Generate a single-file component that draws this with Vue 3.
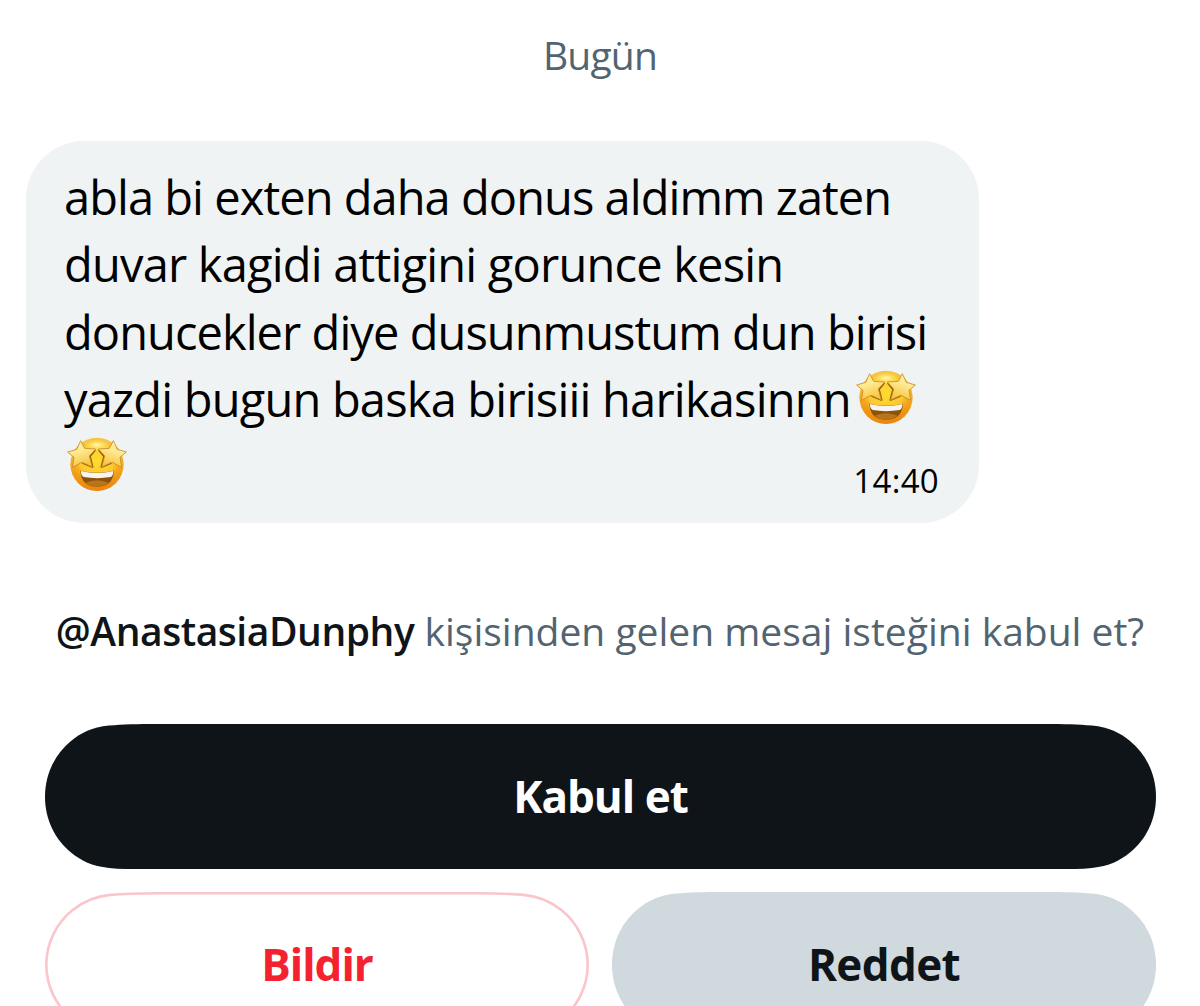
<template>
  <main class="request-page">
    <div class="date-label">Bugün</div>

    <article class="bubble">
      <p class="bubble-text">
        <span
          v-for="(line, i) in lines"
          :key="i"
          class="line"
          :style="{ letterSpacing: line.tracking + 'px' }"
        >
          <span v-if="line.text" class="line-words">{{ line.text }}</span>
          <svg v-if="line.emoji" class="emoji" viewBox="17 30 180 165" role="img" aria-label="🤩">
            <defs>
              <linearGradient :id="'face' + i" x1="0" y1="0" x2="0" y2="1">
                <stop offset="0" stop-color="#f6c545" />
                <stop offset="0.45" stop-color="#f5ae22" />
                <stop offset="1" stop-color="#ea850c" />
              </linearGradient>
              <radialGradient :id="'glow' + i" cx="0.5" cy="0.45" r="0.5">
                <stop offset="0" stop-color="#ffdc2e" />
                <stop offset="0.7" stop-color="#fdc730" />
                <stop offset="1" stop-color="#f6ac20" stop-opacity="0" />
              </radialGradient>
              <radialGradient :id="'shine' + i">
                <stop offset="0" stop-color="#fff7b0" />
                <stop offset="1" stop-color="#ffe561" stop-opacity="0" />
              </radialGradient>
              <linearGradient :id="'star' + i" x1="0" y1="0" x2="0.4" y2="1">
                <stop offset="0" stop-color="#fff3ae" />
                <stop offset="0.5" stop-color="#fde98f" />
                <stop offset="1" stop-color="#f8c545" />
              </linearGradient>
            </defs>
            <circle cx="107" cy="112" r="80" :fill="`url(#face${i})`" />
            <circle cx="107" cy="108" r="73" :fill="`url(#glow${i})`" />
            <ellipse cx="107" cy="54" rx="44" ry="20" :fill="`url(#shine${i})`" />
            <path d="M57 131Q107 143 158 131Q155 179 107 179Q60 179 57 131Z" fill="#8d520a" />
            <path d="M72 167Q107 152 142 167Q126 179 107 179Q88 179 72 167Z" fill="#b87519" />
            <path d="M59 132Q107 144 156 132Q156 147 148 150Q107 157 67 150Q58 146 59 132Z" fill="#f7f3ee" />
            <g fill="none" stroke="#8f5c0c" stroke-width="7" stroke-linejoin="round">
              <path d="M101 68L85 88L93 119L64 107" />
              <path d="M113 68L129 88L121 119L150 107" />
            </g>
            <g :fill="`url(#star${i})`" stroke="#c98a22" stroke-width="2.5" stroke-linejoin="round">
              <path :d="starPath" />
              <path :d="starPath" transform="translate(214 0) scale(-1 1)" />
            </g>
          </svg>
        </span>
      </p>
      <time class="bubble-time">14:40</time>
    </article>

    <p class="question">
      <strong class="handle">@AnastasiaDunphy</strong> kişisinden gelen mesaj isteğini kabul et?
    </p>

    <div class="actions">
      <button
        v-for="btn in buttons"
        :key="btn.kind"
        type="button"
        class="pill"
        :class="btn.kind"
      >
        <svg class="pill-shape" :viewBox="`0 0 ${btn.width} 145.5`" preserveAspectRatio="none">
          <path :d="pillPath(btn.width, 145.5, btn.inset)" />
        </svg>
        <span class="pill-label">{{ btn.label }}</span>
      </button>
    </div>
  </main>
</template>

<script setup>
const lines = [
  { text: 'abla bi exten daha donus aldimm zaten', tracking: -0.95 },
  { text: 'duvar kagidi attigini gorunce kesin', tracking: -0.8 },
  { text: 'donucekler diye dusunmustum dun birisi', tracking: -0.94 },
  { text: 'yazdi bugun baska birisiii harikasinnn', tracking: -0.8, emoji: true },
  { text: '', tracking: 0, emoji: true }
]

const buttons = [
  { kind: 'accept', label: 'Kabul et', width: 1111, inset: 0 },
  { kind: 'report', label: 'Bildir', width: 544, inset: 1.3 },
  { kind: 'decline', label: 'Reddet', width: 544, inset: 0 }
]

const starPath =
  'M58 41L70 64L103 66L84 87L93 120L62 106L33 121L38 91L19 75L46 67Z'

// Bezier points of one continuous corner, from mid-left up to the top edge
const corner = [
  [0, 72.75], [0, 50], [10, 30], [26, 17],
  [36, 8.9], [47, 3.2], [64, 1.6],
  [78, 0.3], [92, 0], [112, 0]
]

const pillPath = (w, h, inset) => {
  const place = (flipX, flipY) =>
    corner.map(([x, y]) => {
      const px = x + inset
      const py = Math.min(y + inset, h / 2)
      return [flipX ? w - px : px, flipY ? h - py : py].join(' ')
    })
  const topLeft = place(false, false)
  const topRight = place(true, false).reverse()
  const bottomRight = place(true, true)
  const bottomLeft = place(false, true).reverse()
  return [
    `M${topLeft[0]}C${topLeft.slice(1).join(' ')}`,
    `L${topRight[0]}C${topRight.slice(1).join(' ')}`,
    `C${bottomRight.slice(1).join(' ')}`,
    `L${bottomLeft[0]}C${bottomLeft.slice(1).join(' ')}Z`
  ].join('')
}
</script>

<style>
body {
  background: #fff;
  overflow: hidden;
}
</style>

<style scoped>
.request-page {
  box-sizing: border-box;
  height: 1006px;
  padding-top: 28px;
  overflow: hidden;
  background: #fff;
  color: #0f1419;
  font-family: "Open Sans", "Noto Sans", sans-serif;
}

.date-label {
  height: 54px;
  line-height: 54px;
  font-size: 39px;
  letter-spacing: -0.8px;
  text-align: center;
  color: #536471;
}

.bubble {
  box-sizing: border-box;
  display: grid;
  width: 953px;
  height: 382px;
  margin: 59px 0 0 26px;
  padding: 23px 40px 19px 38px;
  border-radius: 58px;
  background: #eff3f4;
  color: #000;
}

.bubble-text {
  grid-area: 1 / 1;
  margin: 0;
  font-size: 47px;
  font-weight: 440;
  line-height: 67.3px;
}

.line {
  display: flex;
  align-items: center;
  height: 67.3px;
  white-space: nowrap;
}

.line-words + .emoji {
  margin-left: 5px;
}

.emoji {
  flex: none;
  width: 60px;
  height: 55px;
  margin: 0 0 5px 3px;
}

.bubble-time {
  grid-area: 1 / 1;
  align-self: end;
  justify-self: end;
  font-size: 33px;
  line-height: 46px;
  letter-spacing: 0.3px;
}

.question {
  height: 54px;
  margin: 81px 0 0;
  font-size: 39px;
  line-height: 54px;
  text-align: center;
  white-space: nowrap;
  color: #536471;
}

.handle {
  font-weight: 600;
  letter-spacing: -0.45px;
  color: #0f1419;
}

.actions {
  display: grid;
  grid-template-columns: 1fr 1fr;
  grid-auto-rows: 145.5px;
  gap: 23px;
  margin: 65.7px 44px 0 45px;
}

.pill {
  position: relative;
  display: flex;
  align-items: center;
  justify-content: center;
  padding: 0 0 1px;
  border: none;
  background: none;
  font: 700 44px "Open Sans", "Noto Sans", sans-serif;
  letter-spacing: -1px;
  cursor: pointer;
}

.pill-shape {
  position: absolute;
  inset: 0;
  width: 100%;
  height: 100%;
}

.pill-label {
  position: relative;
}

.accept {
  grid-column: 1 / -1;
  color: #fff;
}

.accept .pill-shape {
  fill: #0f1419;
}

.report {
  color: #f4212e;
}

.report .pill-shape {
  fill: #fff;
  stroke: #fbc5cc;
  stroke-width: 2.6;
}

.decline {
  color: #0f1419;
  letter-spacing: -0.6px;
}

.decline .pill-shape {
  fill: #cfd9de;
}
</style>
